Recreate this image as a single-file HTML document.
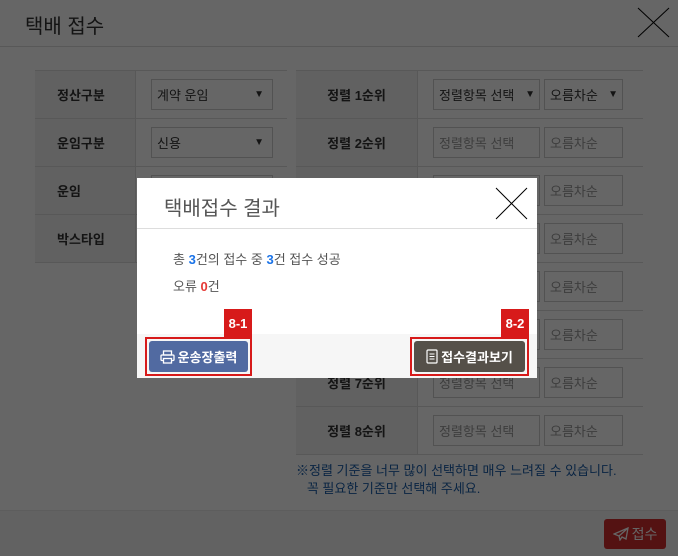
<!DOCTYPE html>
<html><head><meta charset="utf-8"><style>
*{box-sizing:border-box;margin:0;padding:0}
body{width:678px;height:556px;overflow:hidden;position:relative;background:#fff;font-family:"Liberation Sans","Noto Sans CJK KR",sans-serif;font-size:13px;color:#333}
.abs{position:absolute}
.hdr{left:0;top:0;width:678px;height:47px;border-bottom:1px solid #ddd}
.lbl{background:#f2f2f2;font-weight:bold;display:flex;align-items:center;justify-content:center;font-size:13px;color:#333}
.ll{justify-content:flex-start;padding-left:22px}
.sel{border:1px solid #ccc;background:#fff;font-size:13px;color:#333;display:flex;align-items:center;padding-left:5px}
.ph{color:#999}
.ov{left:0;top:0;width:678px;height:556px;background:rgba(0,0,0,.6)}
</style></head><body>
<div class="abs hdr"></div>
<div class="abs" style="left:25px;top:10px;font-size:20px;color:#333">택배 접수</div>
<svg class="abs" style="left:637px;top:7px" width="33" height="31"><path d="M1 1L32 30M32 1L1 30" stroke="#000" stroke-width="1"/></svg>

<div class="abs" style="left:35px;top:70px;width:252px;border-top:1px solid #ddd"></div>
<div class="abs lbl ll" style="left:35px;top:71px;width:100px;height:47px">정산구분</div>
<div class="abs lbl ll" style="left:35px;top:119px;width:100px;height:47px">운임구분</div>
<div class="abs lbl ll" style="left:35px;top:167px;width:100px;height:47px">운임</div>
<div class="abs lbl ll" style="left:35px;top:215px;width:100px;height:47px">박스타입</div>
<div class="abs" style="left:35px;top:118px;width:252px;border-top:1px solid #ddd"></div>
<div class="abs" style="left:35px;top:166px;width:252px;border-top:1px solid #ddd"></div>
<div class="abs" style="left:35px;top:214px;width:252px;border-top:1px solid #ddd"></div>
<div class="abs" style="left:35px;top:262px;width:252px;border-top:1px solid #ddd"></div>
<div class="abs sel" style="left:151px;top:79px;width:122px;height:31px">계약 운임<span style="position:absolute;right:8px;font-size:10px">▼</span></div>
<div class="abs sel" style="left:151px;top:127px;width:122px;height:31px">신용<span style="position:absolute;right:8px;font-size:10px">▼</span></div>
<div class="abs sel" style="left:151px;top:175px;width:122px;height:31px"></div>

<div class="abs" style="left:296px;top:70px;width:347px;border-top:1px solid #ddd"></div>
<div class="abs lbl" style="left:296px;top:71px;width:121px;height:47px">정렬 1순위</div>
<div class="abs lbl" style="left:296px;top:119px;width:121px;height:47px">정렬 2순위</div>
<div class="abs lbl" style="left:296px;top:167px;width:121px;height:47px">정렬 3순위</div>
<div class="abs lbl" style="left:296px;top:215px;width:121px;height:47px">정렬 4순위</div>
<div class="abs lbl" style="left:296px;top:263px;width:121px;height:47px">정렬 5순위</div>
<div class="abs lbl" style="left:296px;top:311px;width:121px;height:47px">정렬 6순위</div>
<div class="abs lbl" style="left:296px;top:359px;width:121px;height:47px">정렬 7순위</div>
<div class="abs lbl" style="left:296px;top:407px;width:121px;height:47px">정렬 8순위</div>
<div class="abs" style="left:296px;top:118px;width:347px;border-top:1px solid #ddd"></div>
<div class="abs" style="left:296px;top:166px;width:347px;border-top:1px solid #ddd"></div>
<div class="abs" style="left:296px;top:214px;width:347px;border-top:1px solid #ddd"></div>
<div class="abs" style="left:296px;top:262px;width:347px;border-top:1px solid #ddd"></div>
<div class="abs" style="left:296px;top:310px;width:347px;border-top:1px solid #ddd"></div>
<div class="abs" style="left:296px;top:358px;width:347px;border-top:1px solid #ddd"></div>
<div class="abs" style="left:296px;top:406px;width:347px;border-top:1px solid #ddd"></div>
<div class="abs" style="left:296px;top:454px;width:347px;border-top:1px solid #ddd"></div>
<div class="abs" style="left:417px;top:70px;height:384px;border-left:1px solid #ddd"></div>
<div class="abs" style="left:135px;top:70px;height:192px;border-left:1px solid #ddd"></div>

<div class="abs sel" style="left:433px;top:79px;width:107px;height:31px">정렬항목 선택<span style="position:absolute;right:4px;font-size:10px">▼</span></div>
<div class="abs sel" style="left:544px;top:79px;width:79px;height:31px">오름차순<span style="position:absolute;right:4px;font-size:10px">▼</span></div>
<div class="abs sel ph" style="left:433px;top:127px;width:107px;height:31px">정렬항목 선택</div>
<div class="abs sel ph" style="left:544px;top:127px;width:79px;height:31px">오름차순</div>
<div class="abs sel ph" style="left:433px;top:175px;width:107px;height:31px">정렬항목 선택</div>
<div class="abs sel ph" style="left:544px;top:175px;width:79px;height:31px">오름차순</div>
<div class="abs sel ph" style="left:433px;top:223px;width:107px;height:31px">정렬항목 선택</div>
<div class="abs sel ph" style="left:544px;top:223px;width:79px;height:31px">오름차순</div>
<div class="abs sel ph" style="left:433px;top:271px;width:107px;height:31px">정렬항목 선택</div>
<div class="abs sel ph" style="left:544px;top:271px;width:79px;height:31px">오름차순</div>
<div class="abs sel ph" style="left:433px;top:319px;width:107px;height:31px">정렬항목 선택</div>
<div class="abs sel ph" style="left:544px;top:319px;width:79px;height:31px">오름차순</div>
<div class="abs sel ph" style="left:433px;top:367px;width:107px;height:31px">정렬항목 선택</div>
<div class="abs sel ph" style="left:544px;top:367px;width:79px;height:31px">오름차순</div>
<div class="abs sel ph" style="left:433px;top:415px;width:107px;height:31px">정렬항목 선택</div>
<div class="abs sel ph" style="left:544px;top:415px;width:79px;height:31px">오름차순</div>

<div class="abs" style="left:296px;top:462px;font-size:13px;line-height:18px;color:#1a5ca8">※정렬 기준을 너무 많이 선택하면 매우 느려질 수 있습니다.<br>&nbsp;&nbsp;&nbsp;꼭 필요한 기준만 선택해 주세요.</div>

<div class="abs" style="left:0;top:510px;width:678px;height:46px;background:#f5f5f5;border-top:1px solid #e8e8e8"></div>
<div class="abs" style="left:604px;top:519px;width:62px;height:30px;background:#d32f2f;border-radius:3px;color:#fff;font-size:14px;display:flex;align-items:center;justify-content:center;gap:3px"><svg width="16" height="14" viewBox="0 0 16 14"><path d="M15 1L1 7l5 2 1 4 2-3 4 2z M6 9l9-8" fill="none" stroke="#fff" stroke-width="1.3"/></svg>접수</div>

<div class="abs ov"></div>

<div class="abs" style="left:137px;top:178px;width:400px;height:200px;background:#fff">
 <div class="abs" style="left:0;top:0;width:400px;height:51px;border-bottom:1px solid #ddd"></div>
 <div class="abs" style="left:27px;top:14px;font-size:20px;color:#555">택배접수 결과</div>
 <svg class="abs" style="left:358px;top:9px" width="33" height="33"><path d="M1 1L32 32M32 1L1 32" stroke="#000" stroke-width="1"/></svg>
 <div class="abs" style="left:36px;top:71px;font-size:13px;color:#555">총 <b style="color:#1a73e8">3</b>건의 접수 중 <b style="color:#1a73e8">3</b>건 접수 성공</div>
 <div class="abs" style="left:36px;top:98px;font-size:13px;color:#555">오류 <b style="color:#e53935">0</b>건</div>
 <div class="abs" style="left:0;top:156px;width:400px;height:44px;background:#f6f6f6"></div>
</div>
<div class="abs" style="left:149px;top:341px;width:99px;height:31px;background:#516aa1;border-radius:3px;color:#fff;font-size:13px;font-weight:bold;display:flex;align-items:center;justify-content:center;gap:3px"><svg width="15" height="14" viewBox="0 0 15 14"><rect x="3.5" y="1" width="8" height="4" fill="none" stroke="#fff" stroke-width="1.3"/><rect x="1" y="5" width="13" height="5.5" rx="1" fill="none" stroke="#fff" stroke-width="1.3"/><rect x="3.5" y="8.5" width="8" height="4.5" fill="#516aa1" stroke="#fff" stroke-width="1.3"/></svg>운송장출력</div>
<div class="abs" style="left:145px;top:337px;width:107px;height:39px;border:2px solid #d71a1a"></div>
<div class="abs" style="left:224px;top:309px;width:28px;height:29px;background:#d71a1a;color:#fff;font-weight:bold;font-size:13px;display:flex;align-items:center;justify-content:center">8-1</div>
<div class="abs" style="left:414px;top:341px;width:111px;height:31px;background:#555049;border-radius:3px;color:#fff;font-size:13px;font-weight:bold;display:flex;align-items:center;justify-content:center;gap:3px"><svg width="12" height="15" viewBox="0 0 12 15"><rect x="1" y="1" width="10" height="13" rx="1" fill="none" stroke="#fff" stroke-width="1.2"/><path d="M3.5 5h5M3.5 7.5h5M3.5 10h5" stroke="#fff" stroke-width="1.1"/></svg>접수결과보기</div>
<div class="abs" style="left:410px;top:337px;width:119px;height:39px;border:2px solid #d71a1a"></div>
<div class="abs" style="left:501px;top:309px;width:28px;height:29px;background:#d71a1a;color:#fff;font-weight:bold;font-size:13px;display:flex;align-items:center;justify-content:center">8-2</div>
</body></html>
